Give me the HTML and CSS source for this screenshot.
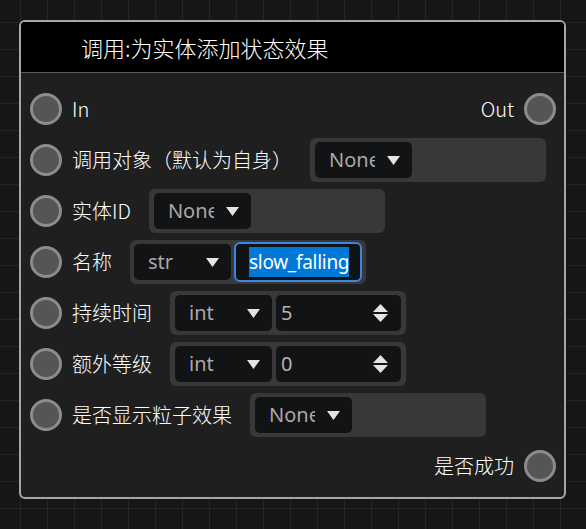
FILE: index.html
```html
<!DOCTYPE html>
<html lang="zh">
<head>
<meta charset="utf-8">
<title>调用:为实体添加状态效果</title>
<link rel="stylesheet" href="styles.css">
</head>
<body>
<div class="node">
  <div class="node-header"><span class="title">调用:为实体添加状态效果</span></div>
  <div class="node-body">
    <div class="row row-io">
      <div class="side"><span class="port"></span><span class="label">In</span></div>
      <div class="side"><span class="label">Out</span><span class="port"></span></div>
    </div>
    <div class="row">
      <span class="port"></span><span class="label">调用对象（默认为自身）</span>
      <div class="field">
        <div class="select"><span class="sel-text">None</span><svg class="arrow" viewBox="0 0 13 9"><path d="M0 0H13L6.5 9Z"/></svg></div>
      </div>
    </div>
    <div class="row">
      <span class="port"></span><span class="label">实体ID</span>
      <div class="field">
        <div class="select"><span class="sel-text">None</span><svg class="arrow" viewBox="0 0 13 9"><path d="M0 0H13L6.5 9Z"/></svg></div>
      </div>
    </div>
    <div class="row">
      <span class="port"></span><span class="label">名称</span>
      <div class="field field-text">
        <div class="select"><span class="sel-text">str</span><svg class="arrow" viewBox="0 0 13 9"><path d="M0 0H13L6.5 9Z"/></svg></div>
        <div class="text-input"><span class="selection">slow_falling</span></div>
      </div>
    </div>
    <div class="row">
      <span class="port"></span><span class="label">持续时间</span>
      <div class="field">
        <div class="select"><span class="sel-text">int</span><svg class="arrow" viewBox="0 0 13 9"><path d="M0 0H13L6.5 9Z"/></svg></div>
        <div class="num-input"><span class="num">5</span><svg class="spin" viewBox="0 0 15 18"><path d="M7.5 0L15 8H0Z"/><path d="M0 10H15L7.5 18Z"/></svg></div>
      </div>
    </div>
    <div class="row">
      <span class="port"></span><span class="label">额外等级</span>
      <div class="field">
        <div class="select"><span class="sel-text">int</span><svg class="arrow" viewBox="0 0 13 9"><path d="M0 0H13L6.5 9Z"/></svg></div>
        <div class="num-input"><span class="num">0</span><svg class="spin" viewBox="0 0 15 18"><path d="M7.5 0L15 8H0Z"/><path d="M0 10H15L7.5 18Z"/></svg></div>
      </div>
    </div>
    <div class="row">
      <span class="port"></span><span class="label">是否显示粒子效果</span>
      <div class="field">
        <div class="select"><span class="sel-text">None</span><svg class="arrow" viewBox="0 0 13 9"><path d="M0 0H13L6.5 9Z"/></svg></div>
      </div>
    </div>
    <div class="row row-end">
      <span class="label">是否成功</span><span class="port"></span>
    </div>
  </div>
</div>
</body>
</html>
```
FILE: styles.css
```css
html, body {
  margin: 0;
  padding: 0;
}
body {
  width: 586px;
  height: 529px;
  overflow: hidden;
  background-color: #161616;
  background-image:
    linear-gradient(to right, #252525 1px, transparent 1px),
    linear-gradient(to bottom, #252525 1px, transparent 1px);
  background-size: 27px 27px;
  background-position: 20px 22px;
  font-family: "Noto Sans", "Noto Sans CJK SC", sans-serif;
  color: #ffffff;
}
.node {
  box-sizing: border-box;
  margin: 20px 0 0 19px;
  width: 547px;
  height: 479px;
  border: 2px solid #a6a6a6;
  border-radius: 6px;
  background: #1f1f1f;
  overflow: hidden;
}
.node-header {
  height: 50px;
  background: #000;
  border-bottom: 1px solid #5a5a5a;
  display: flex;
  align-items: center;
  padding-left: 60px;
}
.title {
  font-family: "Noto Sans CJK SC", sans-serif;
  font-size: 22px;
  font-weight: 300;
  line-height: 26px;
}
.node-body {
  padding: 14px 8px 10px 9px;
  display: flex;
  flex-direction: column;
  gap: 7px;
}
.row {
  height: 44px;
  display: flex;
  align-items: center;
}
.row-io {
  justify-content: space-between;
}
.side {
  display: flex;
  align-items: center;
  gap: 10px;
}
.row-end {
  justify-content: flex-end;
  gap: 10px;
}
.port {
  box-sizing: border-box;
  width: 32px;
  height: 32px;
  border-radius: 50%;
  border: 3px solid #8c8c8c;
  background: #555555;
  flex: none;
}
.row > .port {
  margin-right: 10px;
}
.row-end > .port {
  margin-right: 0;
}
.label {
  font-family: "Noto Sans CJK SC", sans-serif;
  font-size: 20px;
  font-weight: 300;
  line-height: 24px;
  white-space: nowrap;
}
.field {
  box-sizing: border-box;
  margin-left: 18px;
  width: 236px;
  height: 44px;
  background: #383838;
  border-radius: 6px;
  padding: 4px 5px;
  display: flex;
  align-items: center;
  gap: 4px;
}
.select {
  box-sizing: border-box;
  width: 97px;
  height: 36px;
  background: #121315;
  border-radius: 5px;
  padding: 0 12px 0 14px;
  display: flex;
  align-items: center;
  gap: 12px;
  flex: none;
}
.sel-text {
  width: 46px;
  overflow: hidden;
  white-space: nowrap;
  font-size: 20px;
  line-height: 24px;
  color: #a9a9a9;
}
.arrow {
  width: 13px;
  height: 9px;
  fill: #e4e4e4;
  flex: none;
}
.num-input {
  box-sizing: border-box;
  width: 125px;
  height: 36px;
  background: #121315;
  border-radius: 5px;
  padding: 0 13px 0 5px;
  display: flex;
  align-items: center;
  justify-content: space-between;
}
.num {
  font-size: 20px;
  line-height: 24px;
  color: #b3b3b3;
}
.spin {
  width: 15px;
  height: 18px;
  fill: #e4e4e4;
}
.field-text {
  padding: 2px 2px 2px 4px;
  gap: 3px;
}
.text-input {
  box-sizing: border-box;
  width: 128px;
  height: 40px;
  background: #121315;
  border: 2px solid #3a86e0;
  border-radius: 6px;
  padding: 0 0 0 13px;
  display: flex;
  align-items: center;
  overflow: hidden;
}
.selection {
  background: #0078d7;
  color: #ffffff;
  font-size: 19px;
  line-height: 30px;
  white-space: nowrap;
  letter-spacing: -0.3px;
}
```
